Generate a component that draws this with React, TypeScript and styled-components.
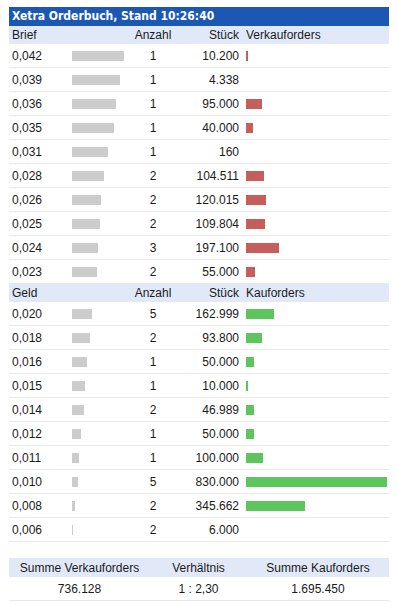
import * as React from 'react';
import styled, { createGlobalStyle } from 'styled-components';

const MAX_STUECK = 830000;
const BAR_MAX = 141;
const MIN_BAR_STUECK = 10000;

interface IOrder {
  price: string;
  depth: number;
  count: number;
  stueck: number;
};

const asks: IOrder[] = [
  { price: '0,042', depth: 52, count: 1, stueck: 10200 },
  { price: '0,039', depth: 48, count: 1, stueck: 4338 },
  { price: '0,036', depth: 44, count: 1, stueck: 95000 },
  { price: '0,035', depth: 42, count: 1, stueck: 40000 },
  { price: '0,031', depth: 36, count: 1, stueck: 160 },
  { price: '0,028', depth: 32, count: 2, stueck: 104511 },
  { price: '0,026', depth: 29, count: 2, stueck: 120015 },
  { price: '0,025', depth: 28, count: 2, stueck: 109804 },
  { price: '0,024', depth: 26, count: 3, stueck: 197100 },
  { price: '0,023', depth: 25, count: 2, stueck: 55000 },
];

const bids: IOrder[] = [
  { price: '0,020', depth: 20, count: 5, stueck: 162999 },
  { price: '0,018', depth: 18, count: 2, stueck: 93800 },
  { price: '0,016', depth: 15, count: 1, stueck: 50000 },
  { price: '0,015', depth: 13, count: 1, stueck: 10000 },
  { price: '0,014', depth: 12, count: 2, stueck: 46989 },
  { price: '0,012', depth: 9, count: 1, stueck: 50000 },
  { price: '0,011', depth: 7, count: 1, stueck: 100000 },
  { price: '0,010', depth: 6, count: 5, stueck: 830000 },
  { price: '0,008', depth: 3, count: 2, stueck: 345662 },
  { price: '0,006', depth: 1, count: 2, stueck: 6000 },
];

const fmt = (n: number): string => n.toString().replace(/\B(?=(\d{3})+(?!\d))/g, '.');

const OrderRows = ({ orders, side }: { orders: IOrder[]; side: 'ask' | 'bid' }) => (
  <>
    {orders.map((o, i) => {
      const w = Math.max(1, Math.round(o.stueck / MAX_STUECK * BAR_MAX));
      return (
        <Row key={i}>
          <Cell>{o.price}</Cell>
          <Cell><Depth style={{ width: o.depth }} /></Cell>
          <Cell align="center">{o.count}</Cell>
          <Cell align="right">{fmt(o.stueck)}</Cell>
          <BarCell>{o.stueck >= MIN_BAR_STUECK && <Bar side={side} style={{ width: w }} />}</BarCell>
        </Row>
      );
    })}
  </>
);

export default function App() {
  return (
    <>
      <GlobalStyle />
      <Container>
        <Title>Xetra Orderbuch, Stand 10:26:40</Title>
        <HeadRow>
          <Cell>Brief</Cell>
          <Cell />
          <Cell align="center">Anzahl</Cell>
          <Cell align="right">Stück</Cell>
          <BarCell>Verkauforders</BarCell>
        </HeadRow>
        <OrderRows orders={asks} side="ask" />
        <HeadRow>
          <Cell>Geld</Cell>
          <Cell />
          <Cell align="center">Anzahl</Cell>
          <Cell align="right">Stück</Cell>
          <BarCell>Kauforders</BarCell>
        </HeadRow>
        <OrderRows orders={bids} side="bid" />
        <Summary>
          <SumHead>
            <span>Summe Verkauforders</span>
            <span>Verhältnis</span>
            <span>Summe Kauforders</span>
          </SumHead>
          <SumRow>
            <span>736.128</span>
            <span>1 : 2,30</span>
            <span>1.695.450</span>
          </SumRow>
        </Summary>
      </Container>
    </>
  );
}

const GlobalStyle = createGlobalStyle`
  body {
    margin: 0;
    background: white;
    font-family: "Liberation Sans", Arial, sans-serif;
    font-size: 12px;
    color: #1a1a1a;
  }
`;

const Container = styled.div`
  width: 380px;
  margin: 7px 9px 0;
`;

const Title = styled.div`
  height: 19px;
  line-height: 19px;
  padding-left: 3px;
  background: #1c57b3;
  color: white;
  font-family: "DejaVu Sans Condensed", "DejaVu Sans", sans-serif;
  font-weight: bold;
  font-size: 12px;
`;

const Grid = styled.div`
  display: grid;
  grid-template-columns: 63px 56px 50px 62px 1fr;
  align-items: center;
`;

const HeadRow = styled(Grid)`
  height: 18px;
  background: #e1e9f9;
  & + & { height: 19px; }
`;

const Row = styled(Grid)`
  height: 23px;
  border-bottom: 1px solid #e8e8e8;
`;

interface ICell {
  align?: 'left' | 'center' | 'right';
};

const Cell = styled.div<ICell>`
  display: flex;
  align-items: center;
  justify-content: ${(p) => p.align === 'center' ? 'center' : p.align === 'right' ? 'flex-end' : 'flex-start'};
  padding: ${(p) => p.align === 'right' ? '0 1px 0 0' : p.align === 'center' ? '0' : '0 0 0 3px'};
  white-space: nowrap;

  &:nth-child(2) { padding: 0; }
`;

const BarCell = styled.div`
  display: flex;
  align-items: center;
  padding-left: 6px;
  white-space: nowrap;
`;

const Depth = styled.div`
  height: 10px;
  background: #cccccc;
`;

const Bar = styled.div<{ side: 'ask' | 'bid' }>`
  height: 10px;
  background: ${(p) => p.side === 'ask' ? '#c75e5e' : '#5ec45e'};
`;

const Summary = styled.div`
  margin-top: 16px;
`;

const SumGrid = styled.div`
  display: grid;
  grid-template-columns: 141px 97px 142px;
  align-items: center;
  text-align: center;
`;

const SumHead = styled(SumGrid)`
  height: 19px;
  background: #e1e9f9;
`;

const SumRow = styled(SumGrid)`
  height: 23px;
  border-bottom: 1px solid #e8e8e8;
`;
